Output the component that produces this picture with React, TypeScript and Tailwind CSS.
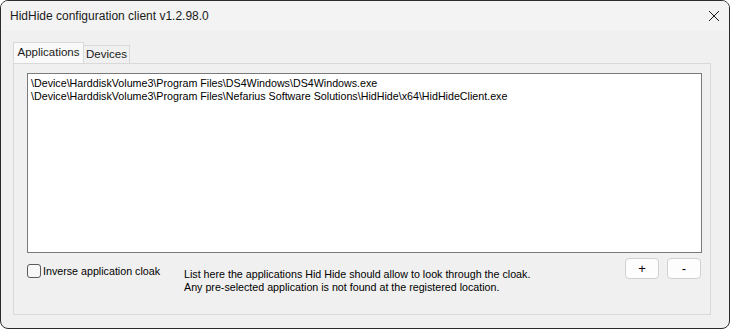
import React from "react";

const apps = [
  "\\Device\\HarddiskVolume3\\Program Files\\DS4Windows\\DS4Windows.exe",
  "\\Device\\HarddiskVolume3\\Program Files\\Nefarius Software Solutions\\HidHide\\x64\\HidHideClient.exe",
];

const CloseIcon = () => (
  <svg width="12" height="12" viewBox="0 0 12 12" className="text-[#1a1a1a]">
    <path d="M1 1 L11 11 M11 1 L1 11" stroke="currentColor" strokeWidth="1" />
  </svg>
);

const App = () => {
  return (
    <div className="w-[730px] h-[329px] bg-[#f0f0f0] border border-[#2b2b2b] rounded-[8px] overflow-hidden flex flex-col font-['Liberation_Sans',Arial,sans-serif] text-[10.7px] text-black">
      {/* title bar */}
      <div className="h-[30px] bg-[#f3f3f3] flex items-center justify-between pl-[9px] pr-[9px]">
        <span className="text-[12px] text-[#1a1a1a]">
          HidHide configuration client v1.2.98.0
        </span>
        <CloseIcon />
      </div>

      <div className="flex-1 pl-[12px] pt-[11px]">
        {/* tabs */}
        <div className="flex items-end h-[21px] text-[11.5px]">
          <div className="h-[21px] w-[71px] border border-b-0 border-[#d9d9d9] bg-[#f9f9f9] flex items-center justify-center text-[#1a1a1a]">
            Applications
          </div>
          <div className="h-[18px] w-[46px] border border-l-0 border-b-0 border-[#d9d9d9] bg-[#f0f0f0] flex items-center justify-center text-[#1a1a1a]">
            Devices
          </div>
        </div>

        {/* tab page */}
        <div className="w-[698px] h-[252px] border border-[#d9d9d9] pl-[13px] pt-[9px]">
          <div className="w-[675px] h-[180px] bg-white border border-[#7a7a7a] pl-[3px] pt-[3px] leading-[13px]">
            {apps.map((a) => (
              <div key={a} className="whitespace-nowrap">
                {a}
              </div>
            ))}
          </div>

          <div className="flex items-start">
            <label className="flex items-center gap-[2px] mt-[10px] w-[156px]">
              <span className="w-[14px] h-[14px] border border-[#5a5a5a] rounded-[3px] bg-[#f7f7f7]" />
              <span>Inverse application cloak</span>
            </label>
            <div className="mt-[15px] ml-[1px] leading-[13px] w-[441px]">
              <div>List here the applications Hid Hide should allow to look through the cloak.</div>
              <div>Any pre-selected application is not found at the registered location.</div>
            </div>
            <div className="flex gap-[8px] mt-[5px]">
              <button className="w-[34px] h-[21px] bg-[#fdfdfd] border border-[#d0d0d0] rounded-[4px] flex items-center justify-center text-[13px] leading-none">
                +
              </button>
              <button className="w-[34px] h-[21px] bg-[#fdfdfd] border border-[#d0d0d0] rounded-[4px] flex items-center justify-center text-[13px] leading-none">
                -
              </button>
            </div>
          </div>
        </div>
      </div>
    </div>
  );
};

export default App;
